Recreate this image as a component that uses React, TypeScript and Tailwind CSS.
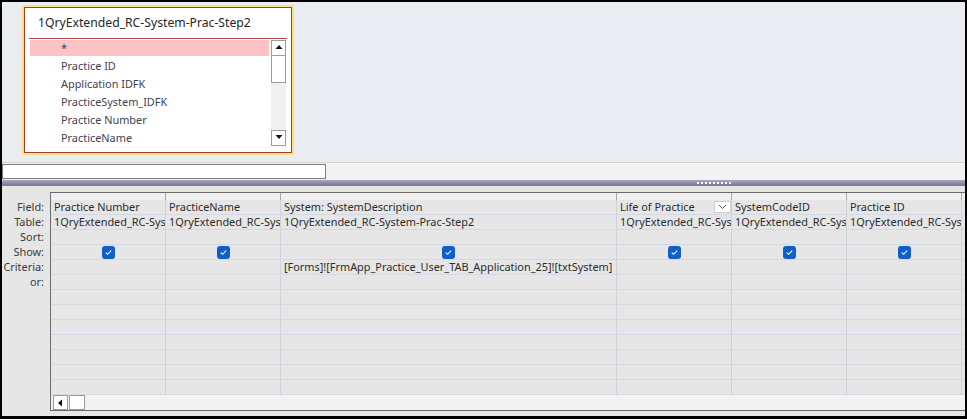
import React from 'react';

const FONT = "font-['Noto_Sans',sans-serif]";

type Col = {
  w: string;
  field: string;
  table: string;
  show: boolean;
  criteria?: string;
  dropdown?: boolean;
};

const COLS: Col[] = [
  { w: 'w-[115px]', field: 'Practice Number', table: '1QryExtended_RC-Sys', show: true },
  { w: 'w-[115px]', field: 'PracticeName', table: '1QryExtended_RC-Sys', show: true },
  {
    w: 'w-[336px]',
    field: 'System: SystemDescription',
    table: '1QryExtended_RC-System-Prac-Step2',
    show: true,
    criteria: '[Forms]![FrmApp_Practice_User_TAB_Application_25]![txtSystem]',
  },
  { w: 'w-[115px]', field: 'Life of Practice', table: '1QryExtended_RC-Sys', show: true, dropdown: true },
  { w: 'w-[115px]', field: 'SystemCodeID', table: '1QryExtended_RC-Sys', show: true },
  { w: 'w-[115px]', field: 'Practice ID', table: '1QryExtended_RC-Sys', show: true },
  { w: 'w-[115px]', field: '', table: '', show: false },
];

const LABELS = ['Field:', 'Table:', 'Sort:', 'Show:', 'Criteria:', 'or:'];
const ROWS = 13;

const FIELDS = ['Practice ID', 'Application IDFK', 'PracticeSystem_IDFK', 'Practice Number', 'PracticeName'];

function Check() {
  return (
    <div className="w-[13px] h-[13px] rounded-[3px] bg-[#0f5fc6] flex items-center justify-center">
      <svg width="9" height="9" viewBox="0 0 9 9">
        <path d="M1.8 4.6 L3.6 6.3 L7.2 2.7" fill="none" stroke="white" strokeWidth="1.1" />
      </svg>
    </div>
  );
}

function Arrow({ dir }: { dir: 'up' | 'down' | 'left' }) {
  const d = dir === 'up' ? 'M0.5 5 L4 1 L7.5 5 Z' : dir === 'down' ? 'M0.5 1 L4 5 L7.5 1 Z' : 'M5 0.5 L1 4 L5 7.5 Z';
  return (
    <svg width="8" height="8" viewBox="0 0 8 8">
      <path d={d} fill="#111" />
    </svg>
  );
}

function TableBox() {
  return (
    <div className="ml-[20px] mt-[3px] w-[272px] h-[150px] border-2 border-[#fde27c]">
      <div className="h-full border border-[#a33b3b] bg-white flex flex-col">
        <div className="h-[30px] flex items-center pl-[13px] text-[12.2px] text-[#262626]">
          1QryExtended_RC-System-Prac-Step2
        </div>
        <div className="mx-[4px] h-px bg-[#b24646]" />
        <div className="flex">
          <div className="ml-[5px] w-[239px] flex flex-col text-[10.9px] text-[#3f3f52]">
            <div className="h-[18px] py-px">
              <div className="h-full bg-[#fdc2c4] pl-[31px] flex items-center">*</div>
            </div>
            {FIELDS.map((f) => (
              <div key={f} className="h-[18px] pl-[31px] flex items-center">
                {f}
              </div>
            ))}
          </div>
          <div className="ml-[2px] mt-px w-[15px] h-[106px] bg-[#f0f0f0] flex flex-col">
            <div className="h-[16px] border border-[#9c9c9c] bg-white flex items-center justify-center">
              <Arrow dir="up" />
            </div>
            <div className="h-[27px] border border-t-0 border-[#9c9c9c] bg-white" />
            <div className="flex-1" />
            <div className="h-[16px] border border-[#9c9c9c] bg-white flex items-center justify-center">
              <Arrow dir="down" />
            </div>
          </div>
        </div>
      </div>
    </div>
  );
}

function Column({ col }: { col: Col }) {
  return (
    <div className={`${col.w} shrink-0 flex flex-col`}>
      <div className="h-[7px] bg-[#f0f0f0] border-r border-[#a9a9a9]" />
      {Array.from({ length: ROWS }).map((_, i) => {
        let content: React.ReactNode = null;
        if (i === 0) content = col.field;
        if (i === 1) content = col.table;
        if (i === 4 && col.criteria) content = col.criteria;
        return (
          <div
            key={i}
            className="relative h-[15px] border-b border-r border-b-[#d3dae6] border-r-[#cdd3dc] pl-[3px] flex items-center overflow-hidden whitespace-nowrap"
          >
            {content}
            {i === 3 && col.show && (
              <div className="flex-1 flex justify-center pr-[3px]">
                <Check />
              </div>
            )}
            {i === 0 && col.dropdown && (
              <div className="absolute right-0 top-[1px] w-[17px] h-[12px] bg-white border border-[#d0d0d0] flex items-center justify-center">
                <svg width="9" height="6" viewBox="0 0 9 6">
                  <path d="M1 1 L4.5 4.5 L8 1" fill="none" stroke="#555" strokeWidth="1" />
                </svg>
              </div>
            )}
          </div>
        );
      })}
    </div>
  );
}

export default function App() {
  return (
    <div className={`w-[967px] h-[419px] bg-black pt-[2px] pl-[2px] pr-[2px] pb-[3px] ${FONT}`}>
      <div className="w-full h-full flex flex-col bg-[#e6e6e6]">
        {/* upper pane: table list */}
        <div className="h-[160px] bg-[#e9ecf0] flex items-start">
          <TableBox />
        </div>
        <div className="h-px bg-[#cfd2d6]" />
        <div className="h-[17px] bg-[#f2f2f2] pt-px">
          <div className="w-[324px] h-[15px] bg-white border border-[#7c7c7c]" />
        </div>

        {/* splitter */}
        <div className="h-[6px] bg-gradient-to-b from-[#a9a8c1] to-[#77768f] flex items-center">
          <div className="ml-[695px] w-[34px] border-t-2 border-dotted border-white" />
        </div>

        {/* design grid */}
        <div className="mt-[6px] h-[219px] flex text-[10.9px] text-[#2b2b2b]">
          <div className="w-[48px] shrink-0 pt-[8px] flex flex-col text-[#3a3a3a]">
            {LABELS.map((l) => (
              <div key={l} className="h-[15px] pr-[6px] flex items-center justify-end">
                {l}
              </div>
            ))}
          </div>
          <div className="flex-1 min-w-0 flex flex-col border-l border-t border-b border-[#6a6a6a]">
            <div className="flex overflow-hidden">
              {COLS.map((c, i) => (
                <Column key={i} col={c} />
              ))}
            </div>
            <div className="flex-1 bg-[#f2f2f2] flex items-start pl-[2px]">
              <div className="w-[15px] h-[15px] border border-[#9c9c9c] bg-white flex items-center justify-center">
                <Arrow dir="left" />
              </div>
              <div className="ml-px w-[16px] h-[15px] border border-[#9c9c9c] bg-white" />
            </div>
          </div>
        </div>
      </div>
    </div>
  );
}
